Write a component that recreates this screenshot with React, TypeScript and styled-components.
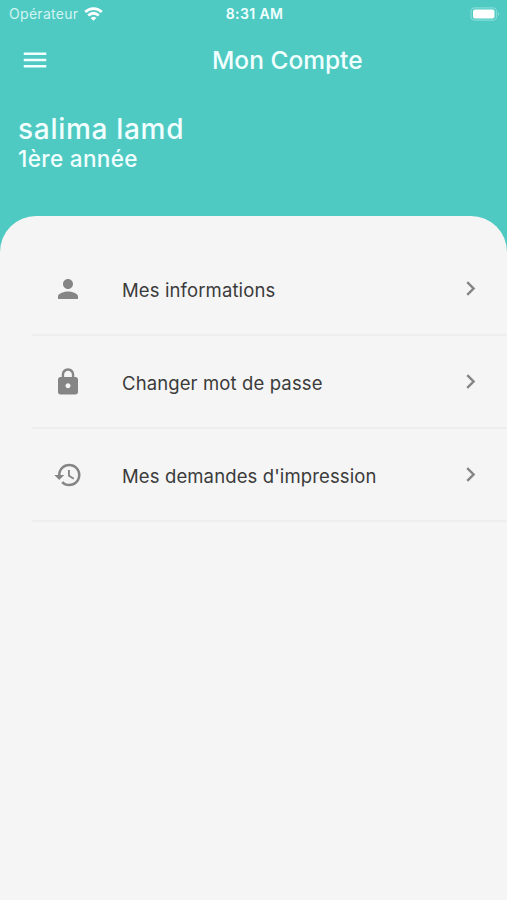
import React from "react";
import styled, { createGlobalStyle } from "styled-components";
import { MdPerson, MdHistory, MdChevronRight, MdMenu } from "react-icons/md";

const GlobalStyle = createGlobalStyle`
  * { box-sizing: border-box; }
  body { margin: 0; background: #f5f5f5; font-family: Inter, sans-serif; }
`;

const Screen = styled.div`
  display: flex;
  flex-direction: column;
  width: 100%;
  height: 900px;
  overflow: hidden;
  background: #4ecac3;
`;

const StatusBar = styled.div`
  display: grid;
  grid-template-columns: 1fr auto 1fr;
  align-items: center;
  height: 27px;
  padding: 0 7px 0 9px;
  color: #f2ffff;
  font-size: 14px;
  line-height: 27px;
`;

const Carrier = styled.div`
  display: flex;
  align-items: center;
  gap: 6px;
  height: 27px;
  color: #d3f4f1;
  letter-spacing: 0.3px;
`;

const Time = styled.div`
  font-size: 14px;
  font-weight: 600;
  letter-spacing: 0.4px;
`;

const Battery = styled.svg`
  justify-self: end;
`;

const AppBar = styled.header`
  display: grid;
  grid-template-columns: 70px 1fr;
  align-items: center;
  height: 66px;
  color: #f2ffff;
`;

const MenuButton = styled.button`
  display: flex;
  width: 30px;
  height: 30px;
  margin-left: 20px;
  padding: 0;
  border: 0;
  background: none;
  color: inherit;
`;

const Title = styled.h1`
  margin: 0 0 0 142px;
  font-size: 24.5px;
  font-weight: 500;
  line-height: 30px;
  letter-spacing: 0;
  white-space: nowrap;
`;

const Profile = styled.section`
  height: 123px;
  padding: 19px 18px 0;
  color: #f2ffff;
`;

const Name = styled.div`
  font-size: 28px;
  font-weight: 500;
  line-height: 34px;
  letter-spacing: 0.7px;
`;

const Grade = styled.div`
  font-size: 22.5px;
  font-weight: 500;
  line-height: 26px;
  letter-spacing: 0.35px;
`;

const Sheet = styled.main`
  flex: 1;
  padding: 27px 0 0 32px;
  border-radius: 36px 36px 0 0;
  background: #f5f5f5;
`;

const Row = styled.div`
  display: grid;
  grid-template-columns: 90px 1fr 51px;
  align-items: center;
  height: 93px;
  border-bottom: 2px solid #eeeeee;
  color: #858585;
`;

const RowIcon = styled.span`
  display: flex;
  padding-left: 21px;
`;

const Label = styled.span`
  padding-top: 2px;
  color: #3b3b3b;
  font-size: 18.5px;
  line-height: 24px;
  letter-spacing: 0.12px;
  white-space: nowrap;
`;

const Arrow = styled(MdChevronRight)`
  display: block;
`;

const LockIcon = () => (
  <svg width="30" height="30" viewBox="0 0 24 24" fill="currentColor">
    <path
      fillRule="evenodd"
      d="M18 8h-1V6c0-2.76-2.24-5-5-5S7 3.24 7 6v2H6c-1.1 0-2 .9-2 2v10c0 1.1.9 2 2 2h12c1.1 0 2-.9 2-2V10c0-1.1-.9-2-2-2zm-6 9c-1.1 0-2-.9-2-2s.9-2 2-2 2 .9 2 2-.9 2-2 2zm3.1-9H8.9V6c0-1.71 1.39-3.1 3.1-3.1s3.1 1.39 3.1 3.1v2z"
    />
  </svg>
);

const items = [
  { label: "Mes informations", icon: <MdPerson size={30} /> },
  { label: "Changer mot de passe", icon: <LockIcon /> },
  { label: "Mes demandes d'impression", icon: <MdHistory size={30} /> },
];

export default function App() {
  return (
    <Screen>
      <GlobalStyle />
      <StatusBar>
        <Carrier>
          Opérateur
          <svg width="19" height="14" viewBox="0 0 19 14" fill="none" stroke="#fff" strokeWidth="2.8">
            <path d="M1.2 5.1a11.8 11.8 0 0 1 16.6 0" />
            <path d="M4.3 8.4a7.4 7.4 0 0 1 10.4 0" />
            <path d="M9.5 13.8 6.7 11a4 4 0 0 1 5.6 0z" fill="#fff" stroke="none" />
          </svg>
        </Carrier>
        <Time>8:31 AM</Time>
        <Battery width="30" height="14" viewBox="0 0 30 14">
          <rect x="1" y="0.8" width="25.5" height="12.4" rx="3.8" fill="none" stroke="#83dbd6" strokeWidth="1.2" />
          <rect x="3" y="2.4" width="21.5" height="9.2" rx="2" fill="#fff" />
          <path d="M28 4.8q1.7 2.2 0 4.4z" fill="#9be2dd" />
        </Battery>
      </StatusBar>
      <AppBar>
        <MenuButton aria-label="Menu">
          <MdMenu size={30} />
        </MenuButton>
        <Title>Mon Compte</Title>
      </AppBar>
      <Profile>
        <Name>salima lamd</Name>
        <Grade>1ère année</Grade>
      </Profile>
      <Sheet>
        {items.map(({ label, icon }) => (
          <Row key={label}>
            <RowIcon>{icon}</RowIcon>
            <Label>{label}</Label>
            <Arrow size={29} />
          </Row>
        ))}
      </Sheet>
    </Screen>
  );
}
